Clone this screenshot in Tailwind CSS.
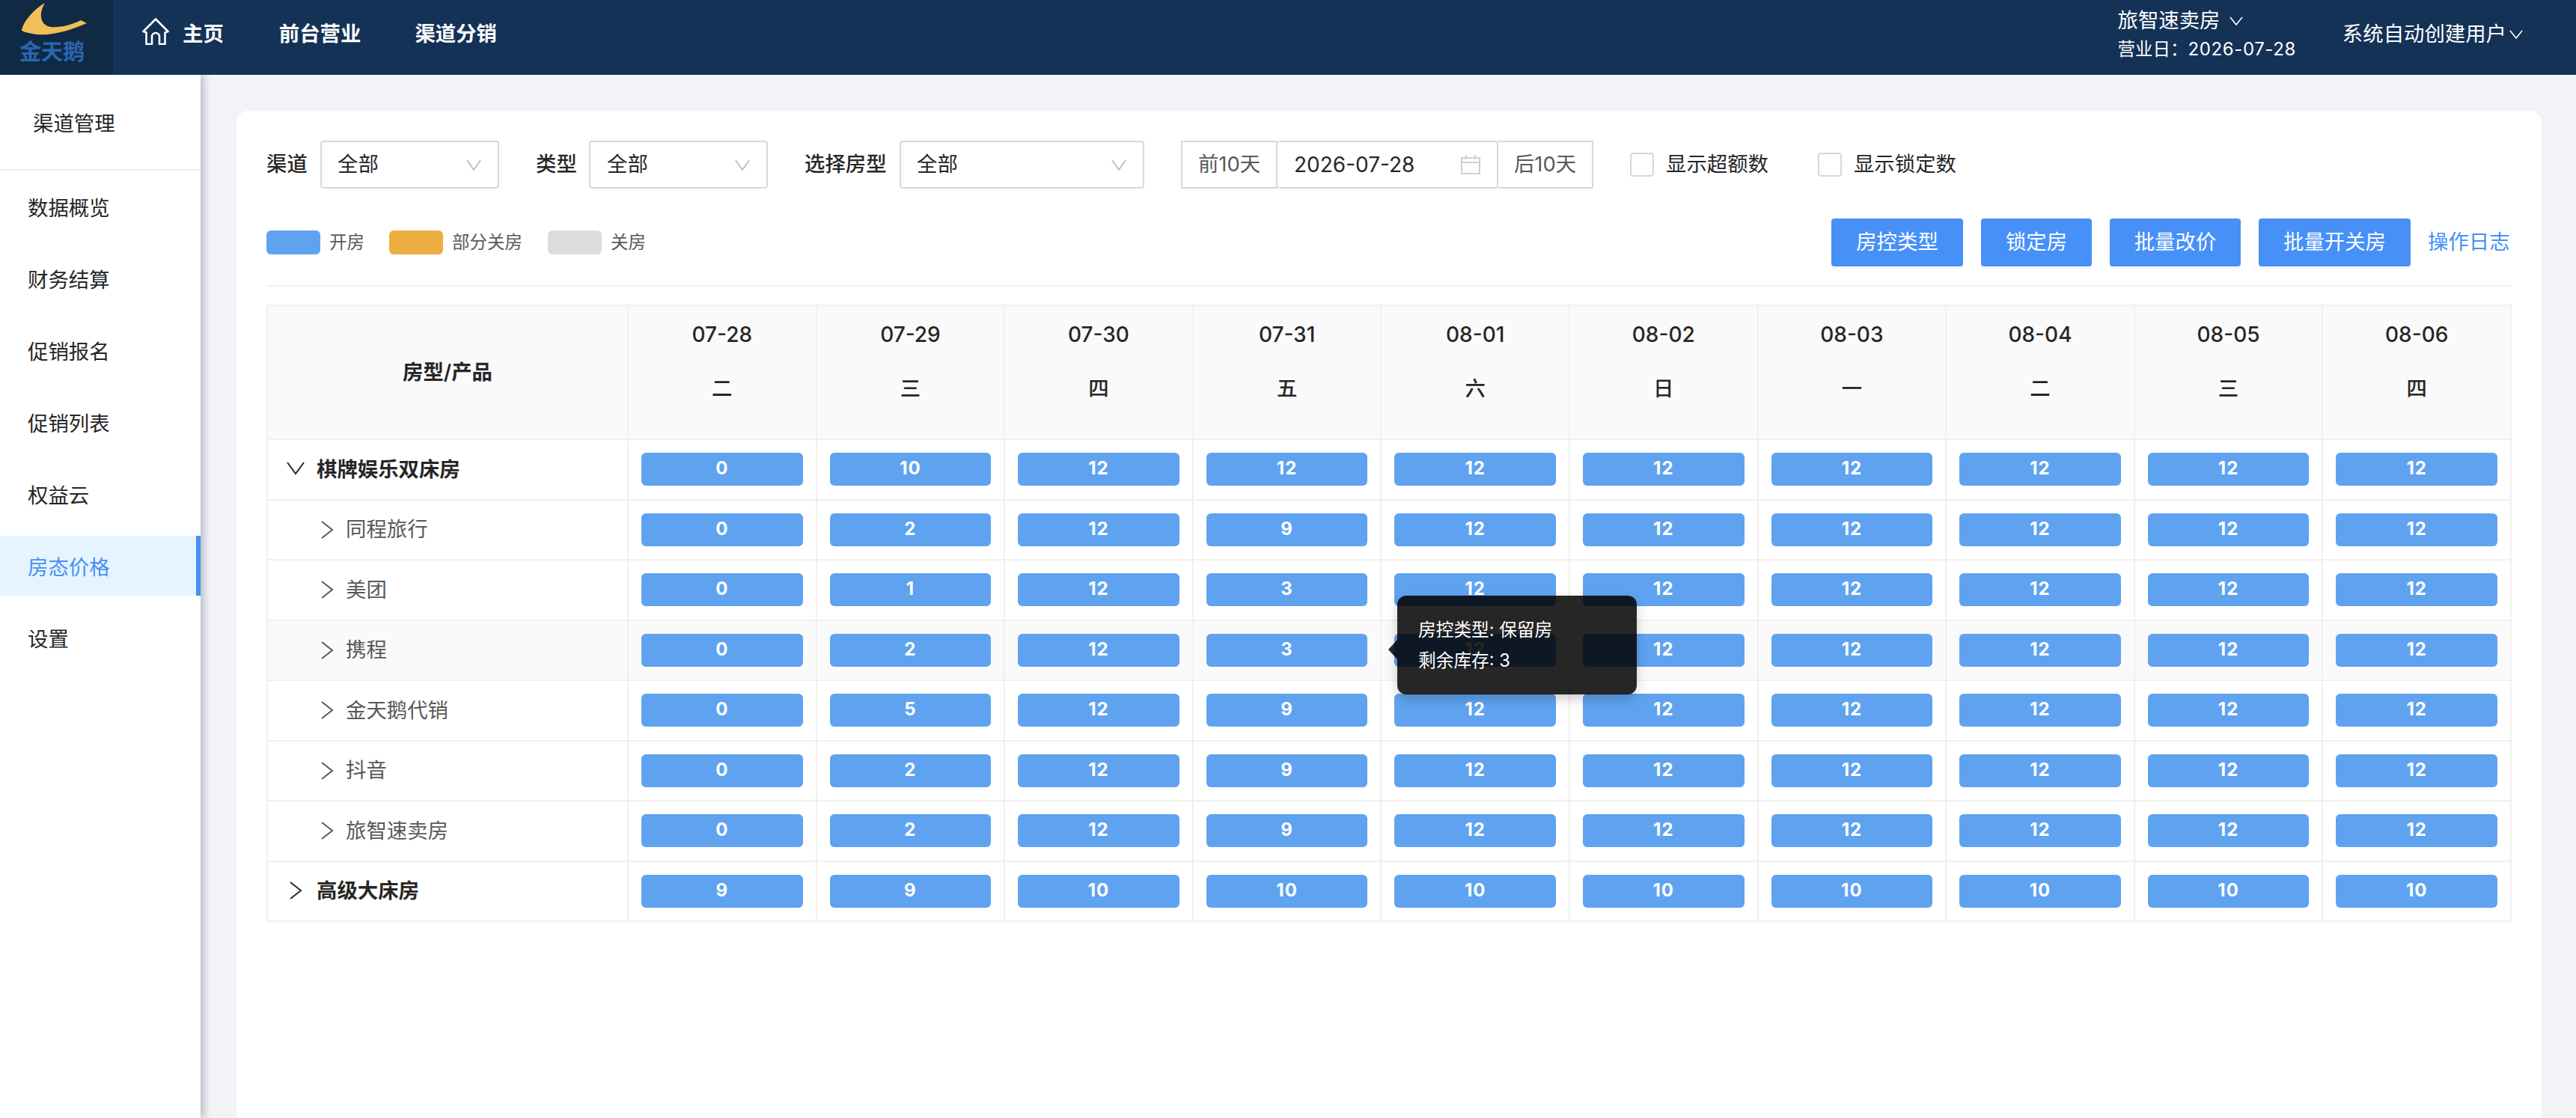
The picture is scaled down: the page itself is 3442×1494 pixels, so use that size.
<!DOCTYPE html>
<html lang="zh-CN">
<head>
    <meta charset="UTF-8">
    <title>房态价格</title>
    <script src="https://cdn.jsdelivr.net/npm/@tailwindcss/browser@4"></script>
</head>
<body class="relative w-[3442px] h-[1494px] overflow-hidden flex flex-col bg-[#f1f3f7] text-[27.4px] text-[#262626] font-['Inter','Noto_Sans_CJK_SC',sans-serif]">
    <!-- top bar -->
    <header class="relative z-20 h-[100px] shrink-0 flex bg-[#143256] text-white">
        <div class="w-[151px] shrink-0 bg-[#102a45] flex flex-col items-center">
            <svg class="mt-[3px] ml-[-6px]" width="90" height="47" viewBox="0 0 90 47">
                <path d="M32 1 C18 9 3 25 1 38 C10 42 22 44 36 43 C54 41 72 35 88 28 L80 24 C66 31 52 34 40 33 C26 31 23 16 32 1 Z" fill="#f0bf58"/>
            </svg>
            <div class="mt-[4px] ml-[-12px] text-[29px] leading-[32px] font-bold text-[#2a66ad]">金天鹅</div>
        </div>
        <nav class="flex items-start pt-[24px] font-bold">
            <svg class="ml-[39px]" width="36" height="36" viewBox="0 0 36 36" fill="none" stroke="white" stroke-width="2.6" stroke-linejoin="round">
                <path d="M1.5 18 L18 1.5 L34.5 18 L30.5 19.5 V35 H23 V25 a5 5 0 0 0 -10 0 V35 H5.5 V19.5 Z"/>
            </svg>
            <span class="ml-[18px] leading-[42px]">主页</span>
            <span class="ml-[74px] leading-[42px]">前台营业</span>
            <span class="ml-[72px] leading-[42px]">渠道分销</span>
        </nav>
        <div class="ml-auto flex items-start">
            <div class="pt-[7px]">
                <div class="flex items-center h-[42px]">旅智速卖房
                    <svg class="ml-[12px]" width="18" height="12" viewBox="0 0 18 12" fill="none" stroke="white" stroke-width="1.6"><path d="M1 1 L9 11 L17 1"/></svg>
                </div>
                <div class="mt-[-3px] h-[40px] leading-[40px] text-[23.5px]">营业日：<span class="text-[24px] tracking-[0.6px]">2026-07-28</span></div>
            </div>
            <div class="ml-[62px] mr-[71px] pt-[25px] flex items-center h-[67px]">系统自动创建用户
                <svg class="ml-[4px]" width="18" height="12" viewBox="0 0 18 12" fill="none" stroke="white" stroke-width="1.6"><path d="M1 1 L9 11 L17 1"/></svg>
            </div>
        </div>
    </header>

    <div class="flex flex-1 min-h-0">
        <!-- sidebar -->
        <aside class="relative z-10 w-[268px] shrink-0 bg-white shadow-[4px_0_10px_rgba(40,50,70,0.3)]">
            <div class="h-[128px] pl-[44px] pt-[44px] leading-[42px] border-b-2 border-[#ebedf0]">渠道管理</div>
            <div id="side-menu" class="pt-[8px] flex flex-col gap-[16px]"></div>
        </aside>

        <!-- content -->
        <main class="flex-1 min-w-0 pl-[48px] pr-[46px] pt-[48px]">
            <div class="h-full bg-white rounded-t-[16px] pl-[40px] pr-[40px] pt-[40px]">
                <!-- filters -->
                <div class="flex items-center h-[64px]">
                    <span class="w-[56px] font-medium">渠道</span>
                    <div class="ml-[16px] w-[239px] h-[64px] flex items-center justify-between pl-[21px] pr-[22px] border-2 border-[#d9d9d9] rounded-[4px]">全部
                        <svg width="20" height="15" viewBox="0 0 20 15" fill="none" stroke="#bfbfbf" stroke-width="2"><path d="M1 1 L10 14 L19 1"/></svg>
                    </div>
                    <span class="ml-[49px] w-[56px] font-medium">类型</span>
                    <div class="ml-[15px] w-[239px] h-[64px] flex items-center justify-between pl-[22px] pr-[22px] border-2 border-[#d9d9d9] rounded-[4px]">全部
                        <svg width="20" height="15" viewBox="0 0 20 15" fill="none" stroke="#bfbfbf" stroke-width="2"><path d="M1 1 L10 14 L19 1"/></svg>
                    </div>
                    <span class="ml-[49px] w-[112px] font-medium">选择房型</span>
                    <div class="ml-[15px] w-[327px] h-[64px] flex items-center justify-between pl-[21px] pr-[22px] border-2 border-[#d9d9d9] rounded-[4px]">全部
                        <svg width="20" height="15" viewBox="0 0 20 15" fill="none" stroke="#bfbfbf" stroke-width="2"><path d="M1 1 L10 14 L19 1"/></svg>
                    </div>
                    <div class="ml-[49px] w-[129px] h-[64px] flex items-center justify-center border-2 border-[#d9d9d9] text-[#595959]">前10天</div>
                    <div class="w-[295px] h-[64px] flex items-center justify-between pl-[22px] pr-[22px] border-2 border-l-0 border-[#d9d9d9] rounded-[4px] text-[28px]">2026-07-28
                        <svg width="26" height="28" viewBox="0 0 26 28" fill="none" stroke="#cfcfcf" stroke-width="2"><path d="M1 5 H25 V26 H1 Z M1 11 H25 M7 1 V7 M19 1 V7"/></svg>
                    </div>
                    <div class="w-[127px] h-[64px] flex items-center justify-center border-2 border-l-0 border-[#d9d9d9] text-[#595959]">后10天</div>
                    <div class="ml-[49px] w-[32px] h-[32px] border-2 border-[#d9d9d9] rounded-[4px]"></div>
                    <span class="ml-[16px]">显示超额数</span>
                    <div class="ml-[66px] w-[32px] h-[32px] border-2 border-[#d9d9d9] rounded-[4px]"></div>
                    <span class="ml-[16px]">显示锁定数</span>
                </div>

                <!-- legend and actions -->
                <div class="mt-[40px] flex items-center h-[64px] text-[23.5px] text-[#595959]">
                    <div class="w-[72px] h-[32px] rounded-[6px] bg-[#5fa3f0]"></div>
                    <span class="ml-[12px]">开房</span>
                    <div class="ml-[33px] w-[72px] h-[32px] rounded-[6px] bg-[#efae41]"></div>
                    <span class="ml-[12px]">部分关房</span>
                    <div class="ml-[34px] w-[72px] h-[32px] rounded-[6px] bg-[#dcdcdc]"></div>
                    <span class="ml-[12px]">关房</span>
                    <div class="ml-auto flex items-center gap-[24px] text-[27.4px] text-white">
                        <button class="w-[176px] h-[64px] rounded-[4px] bg-[#4690f8] shadow-[0_4px_0_rgba(0,0,0,0.03)]">房控类型</button>
                        <button class="w-[148px] h-[64px] rounded-[4px] bg-[#4690f8] shadow-[0_4px_0_rgba(0,0,0,0.03)]">锁定房</button>
                        <button class="w-[175px] h-[64px] rounded-[4px] bg-[#4690f8] shadow-[0_4px_0_rgba(0,0,0,0.03)]">批量改价</button>
                        <button class="w-[203px] h-[64px] rounded-[4px] bg-[#4690f8] shadow-[0_4px_0_rgba(0,0,0,0.03)]">批量开关房</button>
                    </div>
                    <span class="ml-[23px] w-[112px] text-[27.4px] text-[#4690f8]">操作日志</span>
                </div>

                <div class="mt-[25px] h-[2px] bg-[#f0f0f0]"></div>

                <!-- room table -->
                <table class="mt-[24px] w-[3000px] table-fixed border-separate border-spacing-0 border-t-2 border-l-2 border-[#f0f0f0]">
                    <colgroup><col class="w-[482px]"></colgroup>
                    <thead id="table-head"></thead>
                    <tbody id="table-body"></tbody>
                </table>
            </div>
        </main>
    </div>

    <!-- tooltip over the 携程 row -->
    <div class="absolute z-30 left-[1867px] top-[796px] w-[320px] h-[132px] rounded-[12px] bg-black/85 shadow-[0_6px_16px_rgba(0,0,0,0.2)] pl-[28px] pt-[25px] text-[23.7px] leading-[41px] text-white">
        <div class="absolute left-[-12px] top-[59px] border-y-[13px] border-r-[12px] border-y-transparent border-r-black/85"></div>
        <div>房控类型: 保留房</div>
        <div>剩余库存: 3</div>
    </div>

    <script>
        const menuItems = ["数据概览", "财务结算", "促销报名", "促销列表", "权益云", "房态价格", "设置"];
        const days = [
            ["07-28", "二"], ["07-29", "三"], ["07-30", "四"], ["07-31", "五"], ["08-01", "六"],
            ["08-02", "日"], ["08-03", "一"], ["08-04", "二"], ["08-05", "三"], ["08-06", "四"]
        ];
        const rows = [
            { name: "棋牌娱乐双床房", level: 0, open: true, values: [0, 10, 12, 12, 12, 12, 12, 12, 12, 12] },
            { name: "同程旅行", level: 1, values: [0, 2, 12, 9, 12, 12, 12, 12, 12, 12] },
            { name: "美团", level: 1, values: [0, 1, 12, 3, 12, 12, 12, 12, 12, 12] },
            { name: "携程", level: 1, hover: true, values: [0, 2, 12, 3, 12, 12, 12, 12, 12, 12] },
            { name: "金天鹅代销", level: 1, values: [0, 5, 12, 9, 12, 12, 12, 12, 12, 12] },
            { name: "抖音", level: 1, values: [0, 2, 12, 9, 12, 12, 12, 12, 12, 12] },
            { name: "旅智速卖房", level: 1, values: [0, 2, 12, 9, 12, 12, 12, 12, 12, 12] },
            { name: "高级大床房", level: 0, values: [9, 9, 10, 10, 10, 10, 10, 10, 10, 10] }
        ];

        document.getElementById("side-menu").innerHTML = menuItems.map(item => item === "房态价格"
            ? `<div class="h-[80px] leading-[84px] pl-[37px] bg-[#e6f4ff] text-[#4690f8] border-r-[6px] border-[#4690f8]">${item}</div>`
            : `<div class="h-[80px] leading-[84px] pl-[37px]">${item}</div>`).join("");

        const chevronDown = `<svg class="absolute left-[25px] top-[29px]" width="24" height="18" viewBox="0 0 24 18" fill="none" stroke="#262626" stroke-width="2"><path d="M1 1 L12 16 L23 1"/></svg>`;
        const chevronClosed = `<svg class="absolute left-[29px] top-[26px]" width="17" height="24" viewBox="0 0 17 24" fill="none" stroke="#262626" stroke-width="2"><path d="M1 1 L15 12 L1 23"/></svg>`;
        const chevronRight = `<svg class="absolute left-[71px] top-[27px]" width="17" height="24" viewBox="0 0 17 24" fill="none" stroke="#595959" stroke-width="2"><path d="M1 1 L15 12 L1 23"/></svg>`;

        document.getElementById("table-head").innerHTML = `<tr class="h-[179px] bg-[#fafafa]">
            <th class="border-r-2 border-b-2 border-[#f0f0f0] font-semibold">房型/产品</th>
            ${days.map(d => `<th class="border-r-2 border-b-2 border-[#f0f0f0] font-medium pb-[28px] text-[28px]"><div class="h-[33px] leading-[33px] mb-[39px]">${d[0]}</div><div class="h-[33px] leading-[33px] text-[27.4px]">${d[1]}</div></th>`).join("")}
        </tr>`;

        document.getElementById("table-body").innerHTML = rows.map(row => {
            const label = row.level === 0
                ? `<div class="relative h-full flex items-center pl-[65px] font-semibold">${row.open ? chevronDown : chevronClosed}${row.name}</div>`
                : `<div class="relative h-full flex items-center pl-[104px] text-[#595959]">${chevronRight}${row.name}</div>`;
            return `<tr class="h-[80.5px] ${row.hover ? "bg-[#fafafa]" : ""}">
                <td class="border-r-2 border-b-2 border-[#f0f0f0] p-0 h-[80.5px]">${label}</td>
                ${row.values.map(v => `<td class="border-r-2 border-b-2 border-[#f0f0f0] px-[17px]"><div class="h-[44px] leading-[42px] rounded-[6px] bg-[#5fa3f0] text-center text-white text-[24px] font-bold tracking-[1px]">${v}</div></td>`).join("")}
            </tr>`;
        }).join("");
    </script>
</body>
</html>
